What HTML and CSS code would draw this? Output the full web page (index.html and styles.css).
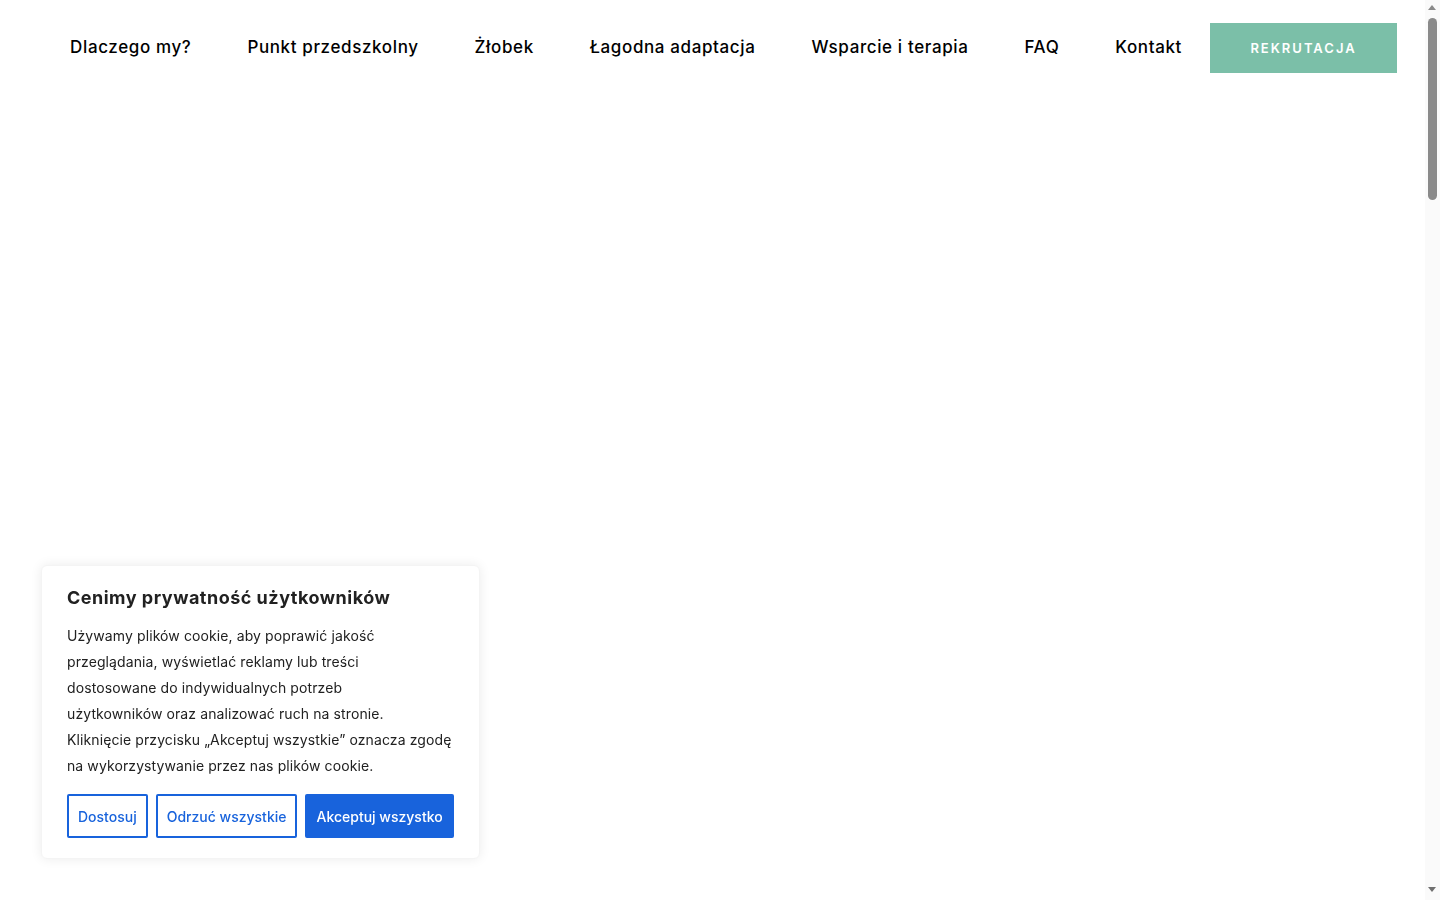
FILE: index.html
```html
<!DOCTYPE html>
<html lang="pl">
<head>
  <meta charset="UTF-8" />
  <meta name="viewport" content="width=device-width, initial-scale=1.0"/>
  <title>Punkt przedszkolny i żłobek</title>
  <link rel="stylesheet" href="styles.css">
</head>
<body>

<header class="site-header">
  <nav class="main-nav">
    <a href="#" class="nav-link">Dlaczego my?</a>
    <a href="#" class="nav-link">Punkt przedszkolny</a>
    <a href="#" class="nav-link">Żłobek</a>
    <a href="#" class="nav-link">Łagodna adaptacja</a>
    <a href="#" class="nav-link">Wsparcie i terapia</a>
    <a href="#" class="nav-link">FAQ</a>
    <a href="#" class="nav-link">Kontakt</a>
    <a href="#" class="nav-cta">Rekrutacja</a>
  </nav>
</header>

<main class="page-content"></main>

<!-- page scroll bar -->
<div class="scroll-track">
  <span class="scroll-arrow up"></span>
  <span class="scroll-thumb"></span>
  <span class="scroll-arrow down"></span>
</div>

<div class="cookie-box">
  <p class="cookie-title">Cenimy prywatność użytkowników</p>
  <p class="cookie-text">Używamy plików cookie, aby poprawić jakość<br>
    przeglądania, wyświetlać reklamy lub treści<br>
    dostosowane do indywidualnych potrzeb<br>
    użytkowników oraz analizować ruch na stronie.<br>
    Kliknięcie przycisku „Akceptuj wszystkie” oznacza zgodę<br>
    na wykorzystywanie przez nas plików cookie.</p>
  <div class="cookie-buttons">
    <button class="cookie-btn outline">Dostosuj</button>
    <button class="cookie-btn outline">Odrzuć wszystkie</button>
    <button class="cookie-btn filled">Akceptuj wszystko</button>
  </div>
</div>

</body>
</html>
```

FILE: styles.css
```css
body {
  font-family: Inter, "Open Sans", sans-serif;
  background-color: #fff;
  color: #000;
  margin: 0;
  padding: 0;
  overflow: hidden;
  height: 100vh;
}
.site-header {
  height: 96px;
  margin-right: 15px;
}
.main-nav {
  display: flex;
  justify-content: flex-end;
  align-items: center;
  padding: 23px 28px 0 0;
}
.nav-link {
  font-size: 17px;
  font-weight: 500;
  letter-spacing: 0.62px;
  color: #000;
  text-decoration: none;
  padding: 0 28px 2px;
  line-height: 48px;
}
.nav-cta {
  background-color: #7bbfa8;
  color: #fff;
  text-decoration: none;
  text-transform: uppercase;
  font-size: 13px;
  font-weight: 600;
  letter-spacing: 2px;
  width: 187px;
  height: 50px;
  line-height: 50px;
  text-align: center;
}
.scroll-track {
  position: fixed;
  top: 0;
  right: 0;
  width: 15px;
  height: 100vh;
  background-color: #fafafa;
}
.scroll-thumb {
  position: absolute;
  top: 18px;
  left: 3px;
  width: 9px;
  height: 182px;
  border-radius: 5px;
  background-color: #8a8a8a;
}
.scroll-arrow {
  position: absolute;
  left: 3px;
  width: 0;
  height: 0;
  border-left: 4.5px solid transparent;
  border-right: 4.5px solid transparent;
}
.scroll-arrow.up {
  top: 5px;
  border-bottom: 5px solid #8a8a8a;
}
.scroll-arrow.down {
  bottom: 8px;
  border-top: 5px solid #6f6f6f;
}
.cookie-box {
  position: fixed;
  left: 41px;
  bottom: 41px;
  width: 439px;
  box-sizing: border-box;
  padding: 20px 26px 20px 25px;
  background-color: #fff;
  border: 1px solid #f4f4f4;
  border-radius: 6px;
  box-shadow: 0 0 12px rgba(0, 0, 0, 0.08);
  color: #212121;
}
.cookie-title {
  margin: 0 0 13px;
  font-size: 18px;
  font-weight: 700;
  letter-spacing: 0.5px;
  line-height: 24px;
}
.cookie-text {
  margin: 0 0 15px;
  font-size: 14px;
  letter-spacing: 0.1px;
  line-height: 26px;
  white-space: nowrap;
}
.cookie-buttons {
  display: flex;
  gap: 8px;
}
.cookie-btn {
  flex-shrink: 0;
  white-space: nowrap;
  font-family: inherit;
  font-size: 14px;
  font-weight: 500;
  height: 44px;
  padding: 0 9px;
  border: 2px solid #1863dc;
  border-radius: 2px;
  cursor: pointer;
}
.cookie-btn.outline {
  background-color: #fff;
  color: #1863dc;
}
.cookie-btn.filled {
  background-color: #1863dc;
  color: #fff;
}
```
